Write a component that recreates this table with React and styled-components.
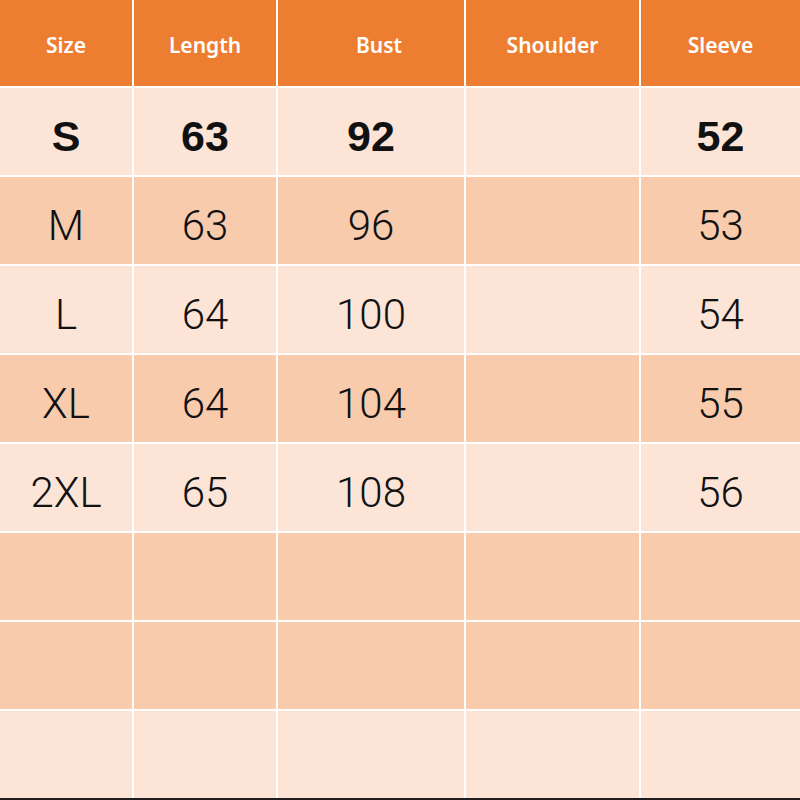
import React from "react";
import styled, { createGlobalStyle } from "styled-components";

const Global = createGlobalStyle`
  html, body { margin: 0; padding: 0; background: #ffffff; }
  #root { width: 800px; height: 800px; overflow: hidden; }
`;

const Table = styled.div`
  width: 800px;
  display: grid;
  grid-template-columns: 132px 142px 186px 173px 159px;
  grid-template-rows: 86px repeat(8, 87px);
  gap: 2px;
  background: #ffffff;
  border-bottom: 2px solid #1f1f1f;
`;

const HeadCell = styled.div`
  background: #ed7d31;
  color: #ffffff;
  display: flex;
  align-items: center;
  justify-content: center;
  font-family: "Noto Sans", "Liberation Sans", sans-serif;
  font-weight: 600;
  font-size: 21px;
  padding-top: 4px;
  padding-left: ${(p) => p.$shift || 0}px;
  box-sizing: border-box;
`;

const Cell = styled.div`
  background: ${(p) => (p.$dark ? "#f8cbad" : "#fce4d6")};
  color: #111111;
  display: flex;
  align-items: center;
  justify-content: center;
  font-family: ${(p) =>
    p.$bold ? '"Liberation Sans", Arial, sans-serif' : 'Roboto, "Liberation Sans", sans-serif'};
  font-weight: ${(p) => (p.$bold ? 700 : 300)};
  font-size: ${(p) => (p.$bold ? 43 : 42)}px;
  padding-top: 10px;
  box-sizing: border-box;
`;

const headers = [
  { t: "Size" },
  { t: "Length" },
  { t: "Bust", shift: 16 },
  { t: "Shoulder" },
  { t: "Sleeve" },
];

const rows = [
  { cells: ["S", "63", "92", "", "52"], dark: false, bold: true },
  { cells: ["M", "63", "96", "", "53"], dark: true },
  { cells: ["L", "64", "100", "", "54"], dark: false },
  { cells: ["XL", "64", "104", "", "55"], dark: true },
  { cells: ["2XL", "65", "108", "", "56"], dark: false },
  { cells: ["", "", "", "", ""], dark: true },
  { cells: ["", "", "", "", ""], dark: true },
  { cells: ["", "", "", "", ""], dark: false },
];

export default function App() {
  return (
    <>
      <Global />
      <Table>
        {headers.map((h) => (
          <HeadCell key={h.t} $shift={h.shift}>
            {h.t}
          </HeadCell>
        ))}
        {rows.map((r, i) =>
          r.cells.map((c, j) => (
            <Cell key={`${i}-${j}`} $dark={r.dark} $bold={r.bold}>
              {c}
            </Cell>
          ))
        )}
      </Table>
    </>
  );
}
